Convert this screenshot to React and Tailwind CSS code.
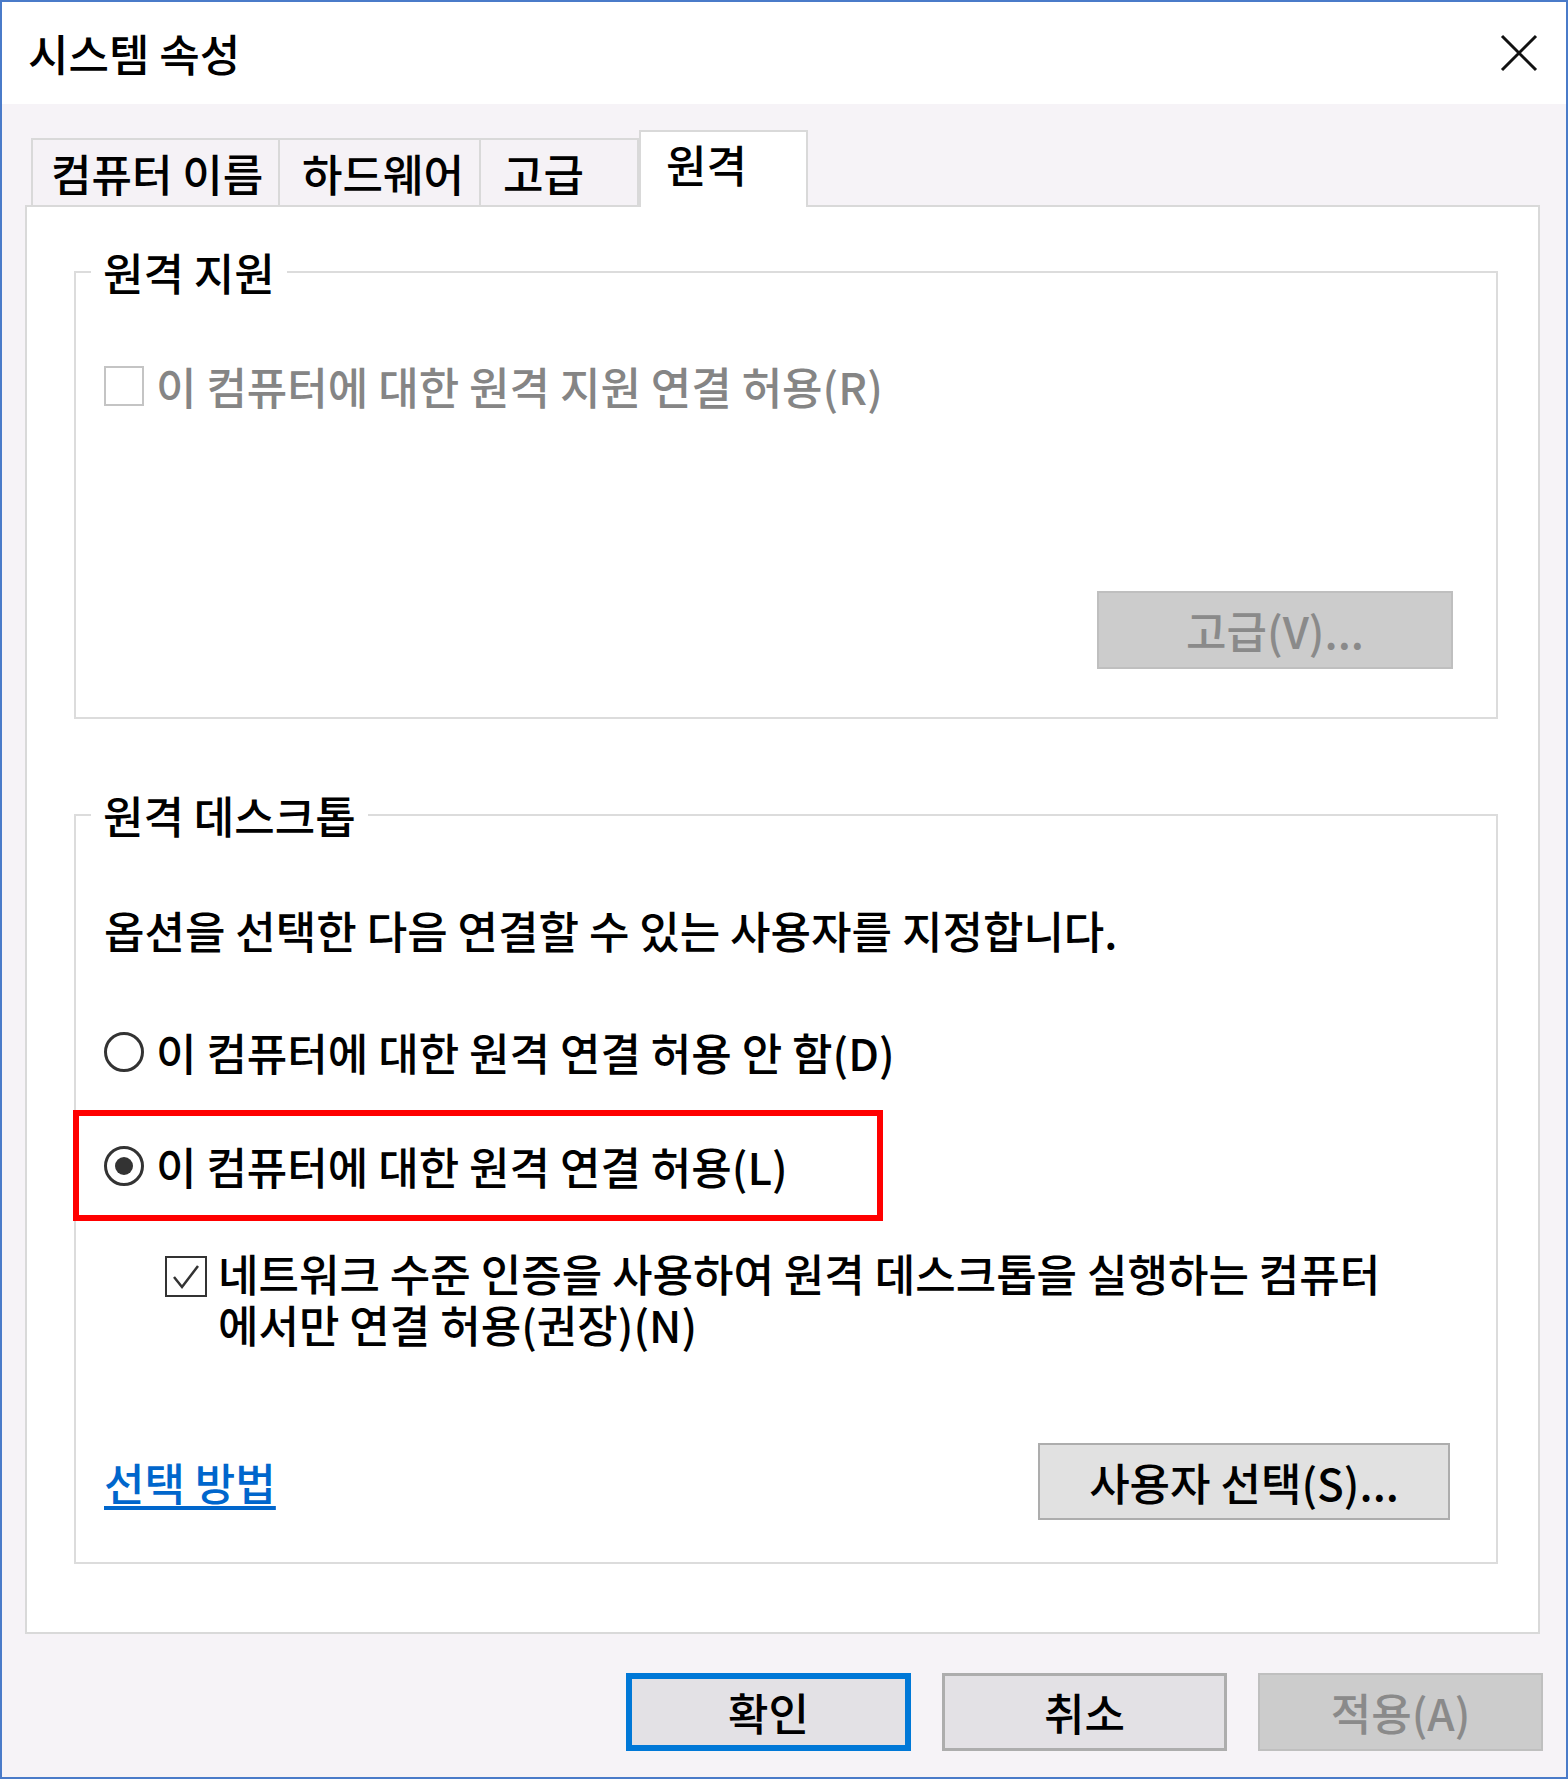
export default function App() {
  return (
    <div className="w-[1568px] h-[1779px] border-2 border-[#4a7bc9] bg-[#f6f3f7] flex flex-col font-['Noto_Sans_CJK_KR','Noto_Sans',sans-serif] font-medium text-[44px] text-black">
      {/* Title bar */}
      <div className="h-[102px] bg-white flex items-center justify-between pl-[26px] pr-[28px] shrink-0">
        <span className="leading-[50px]">시스템 속성</span>
        <svg width="38" height="38" viewBox="0 0 38 38">
          <path d="M2 2 L36 36 M36 2 L2 36" stroke="#111" strokeWidth="3" fill="none" />
        </svg>
      </div>

      {/* Tabs */}
      <div className="h-[101px] flex items-end pl-[29px] shrink-0">
        <div className="w-[249px] h-[67px] bg-[#f5f2f6] border-2 border-b-0 border-[#d9d9d9] pl-[18px] flex items-center leading-[50px]">컴퓨터 이름</div>
        <div className="w-[201px] h-[67px] bg-[#f5f2f6] border-2 border-l-0 border-b-0 border-[#d9d9d9] pl-[22px] flex items-center leading-[50px]">하드웨어</div>
        <div className="w-[158px] h-[67px] bg-[#f5f2f6] border-2 border-l-0 border-b-0 border-[#d9d9d9] pl-[22px] flex items-center leading-[50px]">고급</div>
        <div className="w-[169px] h-[77px] -mb-[2px] bg-white border-2 border-b-0 border-[#d9d9d9] pl-[25px] pb-[12px] flex items-center leading-[50px] relative z-10">원격</div>
      </div>

      {/* Panel */}
      <div className="ml-[23px] mr-[26px] h-[1429px] bg-white border-2 border-[#d9d9d9] pt-[64px] pl-[47px] pr-[40px] shrink-0">
        {/* Group 1 */}
        <div className="border-2 border-[#dcdcdc] pl-[28px] pr-[43px] pb-[48px]">
          <div className="-mt-[25px] -ml-[13px] px-[12px] bg-white w-fit h-[48px] leading-[48px]">원격 지원</div>
          <div className="mt-[65px] h-[50px] flex items-center gap-[12px] text-[#858585]">
            <span className="w-[40px] h-[40px] border-2 border-[#c4c4c4] bg-white shrink-0" />
            <span className="leading-[50px]">이 컴퓨터에 대한 원격 지원 연결 허용(R)</span>
          </div>
          <div className="mt-[180px] flex justify-end">
            <div className="w-[356px] h-[78px] bg-[#cccccc] border-2 border-[#bfbfbf] flex items-center justify-center text-[#8a8a8a] leading-[50px]">고급(V)...</div>
          </div>
        </div>

        {/* Group 2 */}
        <div className="mt-[95px] border-2 border-[#dcdcdc] pl-[28px] pr-[46px] pb-[42px]">
          <div className="-mt-[25px] -ml-[13px] px-[12px] bg-white w-fit h-[48px] leading-[48px]">원격 데스크톱</div>
          <div className="mt-[66px] h-[50px] flex items-center leading-[50px]">옵션을 선택한 다음 연결할 수 있는 사용자를 지정합니다.</div>
          <div className="mt-[72px] h-[50px] flex items-center gap-[12px]">
            <span className="w-[40px] h-[40px] rounded-full border-[3px] border-[#333] bg-white shrink-0" />
            <span className="leading-[50px]">이 컴퓨터에 대한 원격 연결 허용 안 함(D)</span>
          </div>
          <div className="mt-[33px] -ml-[31px] w-[810px] h-[111px] border-[6px] border-[#ff0000] flex items-center gap-[12px] pl-[25px]">
            <span className="w-[40px] h-[40px] rounded-full border-[3px] border-[#333] bg-white shrink-0 flex items-center justify-center">
              <span className="w-[18px] h-[18px] rounded-full bg-[#333]" />
            </span>
            <span className="leading-[50px]">이 컴퓨터에 대한 원격 연결 허용(L)</span>
          </div>
          <div className="mt-[27px] pl-[61px] flex gap-[11px]">
            <span className="mt-[8px] w-[42px] h-[41px] border-2 border-[#333] bg-white shrink-0 flex items-center justify-center">
              <svg width="34" height="34" viewBox="0 0 34 34">
                <path d="M5 17 L13 27 L29 6" stroke="#333" strokeWidth="2.5" fill="none" />
              </svg>
            </span>
            <div className="leading-[51px]">
              <div className="h-[51px]">네트워크 수준 인증을 사용하여 원격 데스크톱을 실행하는 컴퓨터</div>
              <div className="h-[51px]">에서만 연결 허용(권장)(N)</div>
            </div>
          </div>
          <div className="mt-[93px] flex items-center justify-between">
            <span className="text-[#0066cc] underline underline-offset-[5px] leading-[50px]">선택 방법</span>
            <div className="w-[412px] h-[77px] bg-[#e1e1e1] border-2 border-[#adadad] flex items-center justify-center leading-[50px]">사용자 선택(S)...</div>
          </div>
        </div>
      </div>

      {/* Bottom buttons */}
      <div className="mt-[39px] flex justify-end gap-[31px] pr-[23px]">
        <div className="w-[285px] h-[78px] bg-[#e3e1e5] border-[6px] border-[#0078d7] flex items-center justify-center leading-[50px]">확인</div>
        <div className="w-[285px] h-[78px] bg-[#e3e1e5] border-[3px] border-[#adadad] flex items-center justify-center leading-[50px]">취소</div>
        <div className="w-[285px] h-[78px] bg-[#cccccc] border-2 border-[#bfbfbf] flex items-center justify-center text-[#8a8a8a] leading-[50px]">적용(A)</div>
      </div>
    </div>
  );
}
